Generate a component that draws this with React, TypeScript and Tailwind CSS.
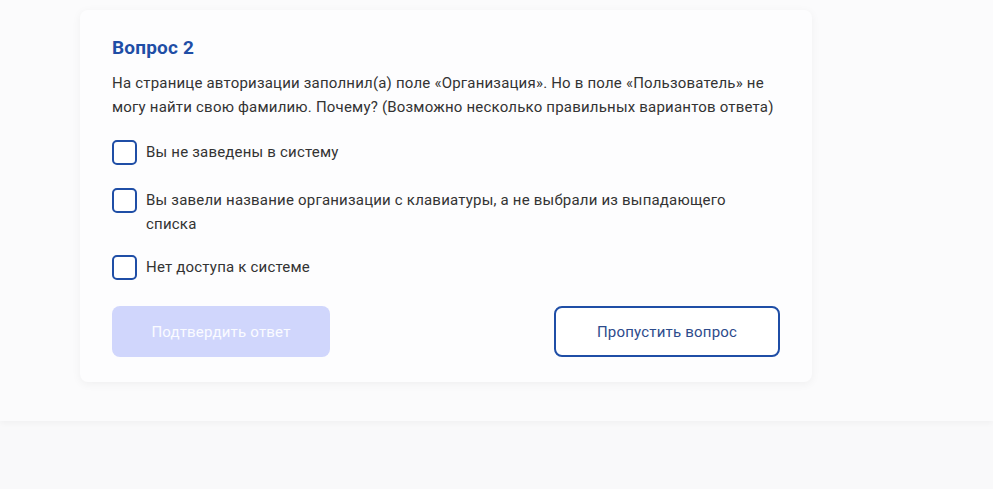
const options = [
  'Вы не заведены в систему',
  'Вы завели название организации с клавиатуры, а не выбрали из выпадающего списка',
  'Нет доступа к системе',
];

export default function App() {
  return (
    <div className="min-h-[489px] bg-[#f9f9fa] font-['Roboto',sans-serif] tracking-[0.2px]">
      {/* Question section */}
      <div className="bg-[#fbfbfc] pt-[10px] pb-[39px] pl-[80px] shadow-[0_2px_6px_rgba(0,0,0,0.04)]">
        <div className="w-[732px] rounded-lg bg-[#fdfdfe] px-8 pt-[26px] pb-[25px] shadow-[0_2px_10px_rgba(0,0,0,0.05)]">
          <h2 className="text-[19px] font-bold leading-6 text-[#1f4ea6]">Вопрос 2</h2>
          <p className="mt-[11px] text-[15px] leading-6 text-[#333]">
            На странице авторизации заполнил(а) поле «Организация». Но в поле «Пользователь» не
            могу найти свою фамилию. Почему? (Возможно несколько правильных вариантов ответа)
          </p>

          <div className="mt-[21px] flex flex-col gap-[19px]">
            {options.map((text) => (
              <label key={text} className="flex min-h-[29px] items-start gap-[9px]">
                <span className="h-[25px] w-[25px] shrink-0 rounded-[5px] border-2 border-[#1f4ea6] bg-white" />
                <span className="text-[15px] leading-6 text-[#333]">{text}</span>
              </label>
            ))}
          </div>

          <div className="mt-[22px] flex items-center justify-between">
            <button className="h-[51px] w-[218px] rounded-lg bg-[#d0d6fc] pt-px text-[15px] text-white/90">
              Подтвердить ответ
            </button>
            <button className="h-[51px] w-[226px] rounded-lg border-2 border-[#1f4ea6] bg-white pt-px text-[15px] text-[#2d4b8c]">
              Пропустить вопрос
            </button>
          </div>
        </div>
      </div>
    </div>
  );
}
